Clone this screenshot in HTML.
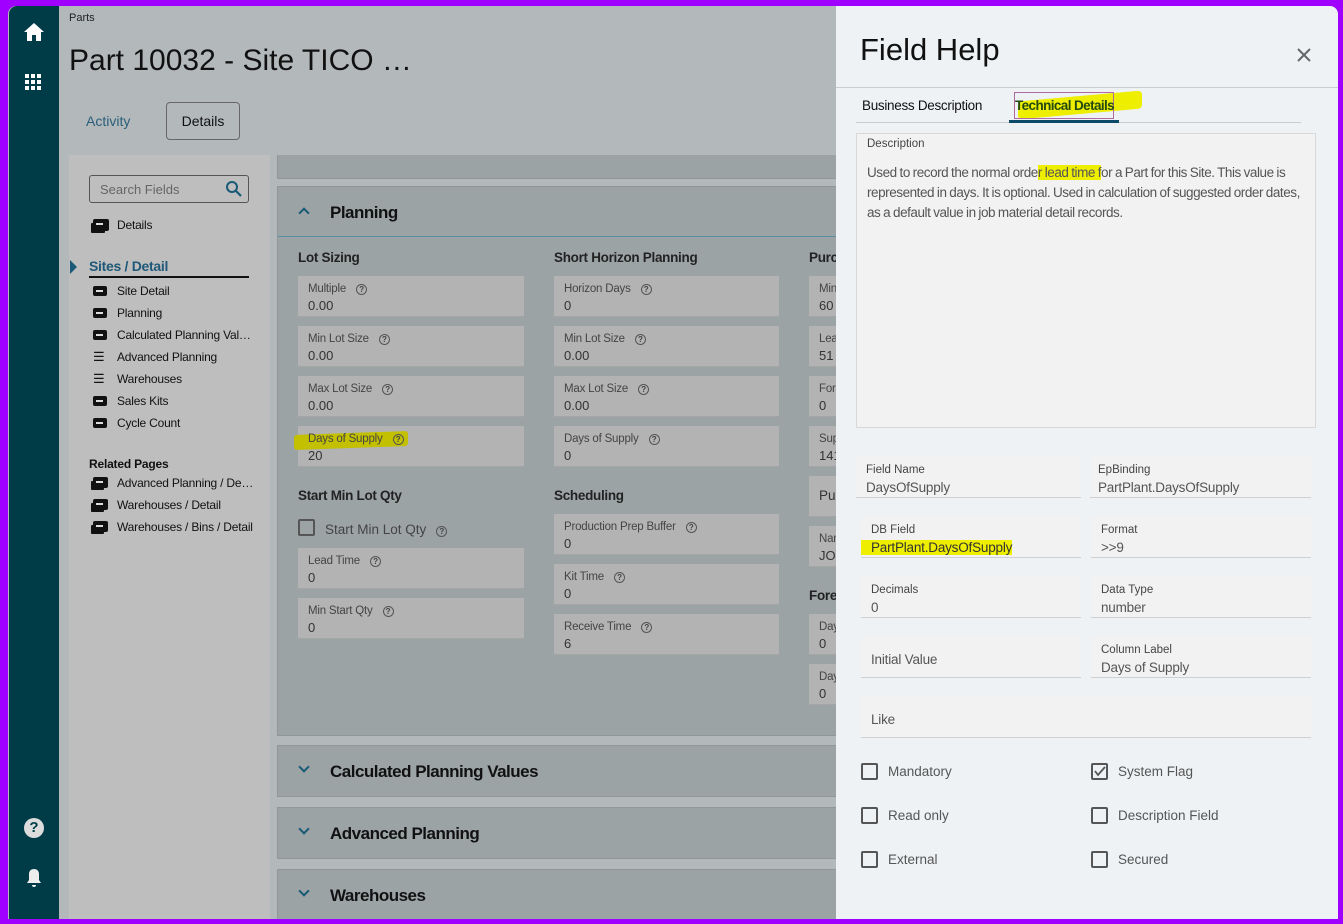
<!DOCTYPE html>
<html><head><meta charset="utf-8"><style>
*{box-sizing:border-box;margin:0;padding:0}
body{width:1343px;height:924px;overflow:hidden;background:#a000ff;font-family:"Liberation Sans",sans-serif;position:relative}
.a{position:absolute}
#frame{left:8px;top:6px;width:1330px;height:913px;background:#b3b8bb;overflow:hidden;border-radius:8px 8px 0 0}
.side{left:1px;top:0;width:50px;height:913px;background:#003c48;border-radius:8px 0 0 0}
.t{color:#222;white-space:nowrap}
.fb{background:#b3b3b3;height:40px;box-shadow:0 1px 0 #a5a5a5}
.fb .l{position:absolute;left:10px;top:7px;font-size:11.5px;color:#444;letter-spacing:-.2px}
.fb .v{position:absolute;left:10px;top:22px;font-size:13px;color:#333}
.q{display:inline-block;width:11px;height:11px;border:1.3px solid #555;border-radius:50%;font-size:8px;line-height:9px;text-align:center;margin-left:10px;vertical-align:0;color:#444;font-weight:bold}
.h{font-size:13.5px;font-weight:bold;color:#222;letter-spacing:-.3px}
.sec{background:#9ca3a5;border:1px solid #8f9799}
.sec .st{position:absolute;left:52px;font-size:17px;font-weight:bold;color:#111;letter-spacing:-.5px}
.chev{position:absolute;left:22px;width:8px;height:8px;border-right:2px solid #1a5a78;border-bottom:2px solid #1a5a78}
.nav{font-size:12px;color:#111;letter-spacing:-.2px}
.ico{position:absolute;left:0;width:14px;height:10px;background:#111;border-radius:2px}
.ico::after{content:"";position:absolute;left:3px;top:4px;width:7px;height:2px;background:#ddd}
.fh .l{position:absolute;top:8px;left:10px;font-size:11.5px;color:#444}
.fh .v{position:absolute;top:24px;left:10px;font-size:13.5px;color:#555;letter-spacing:-.2px}
.fh{background:#f2f2f2;border-bottom:1.5px solid #d0d0d0;height:42px}
.cb{width:17px;height:17px;border:2px solid #555;border-radius:2px}
.cl{font-size:13.5px;color:#555}
.hl{background:#eeee00}
</style></head><body>
<div id="frame" class="a">
 <div class="a side">
  <svg class="a" style="left:15px;top:17px" width="20" height="18" viewBox="0 0 20 18"><path d="M10 0L0 9h3v9h5v-6h4v6h5V9h3z" fill="#fff"/></svg>
  <svg class="a" style="left:16px;top:68px" width="18" height="18"><g fill="#fff"><rect x="0" y="0" width="4" height="4"/><rect x="6" y="0" width="4" height="4"/><rect x="12" y="0" width="4" height="4"/><rect x="0" y="6" width="4" height="4"/><rect x="6" y="6" width="4" height="4"/><rect x="12" y="6" width="4" height="4"/><rect x="0" y="12" width="4" height="4"/><rect x="6" y="12" width="4" height="4"/><rect x="12" y="12" width="4" height="4"/></g></svg>
  <div class="a" style="left:15px;top:812px;width:20px;height:20px;border-radius:50%;background:#ddd;color:#003c48;font-weight:bold;font-size:15px;text-align:center;line-height:20px">?</div>
  <svg class="a" style="left:17px;top:862px" width="16" height="20" viewBox="0 0 16 20"><path d="M8 1c-3 0-5 2-5 5v6l-2 3h14l-2-3V6c0-3-2-5-5-5zM6 17h4a2 2 0 0 1-4 0z" fill="#eee"/></svg>
 </div>
 <div class="a t" style="left:61px;top:6px;font-size:11px">Parts</div>
 <div class="a t" style="left:61px;top:38px;font-size:30px;color:#111">Part 10032 - Site TICO …</div>
 <div class="a" style="left:78px;top:107px;font-size:14px;color:#2a5f7a">Activity</div>
 <div class="a" style="left:158px;top:96px;width:74px;height:38px;border:1px solid #666;border-radius:4px;font-size:14px;text-align:center;line-height:36px;color:#111">Details</div>
 <!-- left nav -->
 <div class="a" style="left:61px;top:149px;width:201px;height:770px;background:#bebebe">
  <div class="a" style="left:20px;top:20px;width:160px;height:28px;border:1px solid #555;border-radius:3px;font-size:13px;color:#666;padding:6px 10px">Search Fields
   <svg class="a" style="right:5px;top:4px" width="18" height="18"><circle cx="7" cy="7" r="5" stroke="#1a5a78" stroke-width="2" fill="none"/><path d="M11 11l5 5" stroke="#1a5a78" stroke-width="2.2"/></svg></div>
  <div class="a nav" style="left:24px;top:63px;width:160px;height:16px"><span class="ico" style="top:1px;width:16px;height:12px;box-shadow:-3px 3px 0 -1px #111"></span><span style="position:absolute;left:24px;top:0">Details</span></div>
  <div class="a" style="left:1px;top:105px;width:0;height:0;border-left:7px solid #1a5a78;border-top:7px solid transparent;border-bottom:7px solid transparent"></div>
  <div class="a" style="left:20px;top:103px;width:160px;font-size:14px;font-weight:bold;color:#1f5878;border-bottom:2px solid #111;padding-bottom:2px;letter-spacing:-.3px">Sites / Detail</div>
  <div class="a nav" style="left:24px;top:125px;line-height:22px;width:170px">
   <div style="position:relative;padding-left:24px"><span class="ico" style="top:6px"></span>Site Detail</div>
   <div style="position:relative;padding-left:24px"><span class="ico" style="top:6px"></span>Planning</div>
   <div style="position:relative;padding-left:24px"><span class="ico" style="top:6px"></span>Calculated Planning Val…</div>
   <div style="position:relative;padding-left:24px"><span style="position:absolute;left:0;top:0;font-size:13px">☰</span>Advanced Planning</div>
   <div style="position:relative;padding-left:24px"><span style="position:absolute;left:0;top:0;font-size:13px">☰</span>Warehouses</div>
   <div style="position:relative;padding-left:24px"><span class="ico" style="top:6px"></span>Sales Kits</div>
   <div style="position:relative;padding-left:24px"><span class="ico" style="top:6px"></span>Cycle Count</div>
  </div>
  <div class="a" style="left:20px;top:302px;font-size:12px;font-weight:bold;color:#111;letter-spacing:-.2px">Related Pages</div>
  <div class="a nav" style="left:24px;top:317px;line-height:22px;width:170px">
   <div style="position:relative;padding-left:24px"><span class="ico" style="top:5px;width:15px;height:11px;box-shadow:-3px 3px 0 -1px #111"></span>Advanced Planning / De…</div>
   <div style="position:relative;padding-left:24px"><span class="ico" style="top:5px;width:15px;height:11px;box-shadow:-3px 3px 0 -1px #111"></span>Warehouses / Detail</div>
   <div style="position:relative;padding-left:24px"><span class="ico" style="top:5px;width:15px;height:11px;box-shadow:-3px 3px 0 -1px #111"></span>Warehouses / Bins / Detail</div>
  </div>
 </div>
 <!-- sections -->
 <div class="a sec" style="left:269px;top:149px;width:600px;height:24px;border-top:none"></div>
 <div class="a sec" style="left:269px;top:180px;width:600px;height:550px">
  <div class="chev" style="top:22px;transform:rotate(225deg)"></div>
  <div class="st" style="top:16px">Planning</div>
  <div class="a" style="left:0;top:49px;width:600px;height:1px;background:#5a8ea3"></div>
 </div>
 <div class="a h" style="left:290px;top:244px">Lot Sizing</div>
 <div class="a h" style="left:546px;top:244px">Short Horizon Planning</div>
 <div class="a h" style="left:801px;top:244px">Purchasing</div>
 <div class="a h" style="left:290px;top:482px">Start Min Lot Qty</div>
 <div class="a h" style="left:546px;top:482px">Scheduling</div>
 <div class="a h" style="left:801px;top:582px">Forecast</div>
 <div class="a fb" style="left:290px;top:270px;width:226px"><div class="l">Multiple<span class="q">?</span></div><div class="v">0.00</div></div>
 <div class="a fb" style="left:290px;top:320px;width:226px"><div class="l">Min Lot Size<span class="q">?</span></div><div class="v">0.00</div></div>
 <div class="a fb" style="left:290px;top:370px;width:226px"><div class="l">Max Lot Size<span class="q">?</span></div><div class="v">0.00</div></div>
 <div class="a fb" style="left:290px;top:420px;width:226px"></div>
 <div class="a" style="left:286px;top:427px;width:114px;height:15px;background:#c2c000;border-radius:3px;transform:skewY(-2deg)"></div>
 <div class="a fb" style="left:290px;top:420px;width:226px;background:transparent;box-shadow:none"><div class="l">Days of Supply<span class="q">?</span></div><div class="v">20</div></div>
 <div class="a cb" style="left:290px;top:513px"></div>
 <div class="a" style="left:317px;top:516px;font-size:13.5px;color:#444">Start Min Lot Qty<span class="q">?</span></div>
 <div class="a fb" style="left:290px;top:542px;width:226px"><div class="l">Lead Time<span class="q">?</span></div><div class="v">0</div></div>
 <div class="a fb" style="left:290px;top:592px;width:226px"><div class="l">Min Start Qty<span class="q">?</span></div><div class="v">0</div></div>
 <div class="a fb" style="left:546px;top:270px;width:225px"><div class="l">Horizon Days<span class="q">?</span></div><div class="v">0</div></div>
 <div class="a fb" style="left:546px;top:320px;width:225px"><div class="l">Min Lot Size<span class="q">?</span></div><div class="v">0.00</div></div>
 <div class="a fb" style="left:546px;top:370px;width:225px"><div class="l">Max Lot Size<span class="q">?</span></div><div class="v">0.00</div></div>
 <div class="a fb" style="left:546px;top:420px;width:225px"><div class="l">Days of Supply<span class="q">?</span></div><div class="v">0</div></div>
 <div class="a fb" style="left:546px;top:508px;width:225px"><div class="l">Production Prep Buffer<span class="q">?</span></div><div class="v">0</div></div>
 <div class="a fb" style="left:546px;top:558px;width:225px"><div class="l">Kit Time<span class="q">?</span></div><div class="v">0</div></div>
 <div class="a fb" style="left:546px;top:608px;width:225px"><div class="l">Receive Time<span class="q">?</span></div><div class="v">6</div></div>
 <div class="a fb" style="left:801px;top:270px;width:100px"><div class="l">Min Order</div><div class="v">60</div></div>
 <div class="a fb" style="left:801px;top:320px;width:100px"><div class="l">Lead Time</div><div class="v">51</div></div>
 <div class="a fb" style="left:801px;top:370px;width:100px"><div class="l">Fore</div><div class="v">0</div></div>
 <div class="a fb" style="left:801px;top:420px;width:100px"><div class="l">Supplier</div><div class="v">141</div></div>
 <div class="a fb" style="left:801px;top:470px;width:100px"><div class="v" style="top:12px;font-size:13.5px">Purchaser</div></div>
 <div class="a fb" style="left:801px;top:520px;width:100px"><div class="l">Name</div><div class="v">JOHN</div></div>
 <div class="a fb" style="left:801px;top:608px;width:100px"><div class="l">Days</div><div class="v">0</div></div>
 <div class="a fb" style="left:801px;top:658px;width:100px"><div class="l">Days</div><div class="v">0</div></div>
 <div class="a sec" style="left:269px;top:739px;width:600px;height:52px"><div class="chev" style="top:17px;transform:rotate(45deg)"></div><div class="st" style="top:16px">Calculated Planning Values</div></div>
 <div class="a sec" style="left:269px;top:801px;width:600px;height:52px"><div class="chev" style="top:17px;transform:rotate(45deg)"></div><div class="st" style="top:16px">Advanced Planning</div></div>
 <div class="a sec" style="left:269px;top:863px;width:600px;height:60px"><div class="chev" style="top:17px;transform:rotate(45deg)"></div><div class="st" style="top:16px">Warehouses</div></div>
 <!-- field help panel -->
 <div class="a" style="left:828px;top:0;width:502px;height:913px;background:#eef2f5;border-radius:0 8px 0 0">
  <div class="a" style="left:24px;top:26px;font-size:31px;color:#111">Field Help</div>
  <svg class="a" style="left:461px;top:42px" width="14" height="14"><path d="M1 1l12 12M13 1L1 13" stroke="#666" stroke-width="2"/></svg>
  <div class="a" style="left:0;top:81px;width:502px;height:1px;background:#ccc"></div>
  <div class="a" style="left:20px;top:116px;width:445px;height:1px;background:#ccc"></div>
  <div class="a" style="left:26px;top:92px;font-size:13.5px;color:#111;letter-spacing:-.3px">Business Description</div>
  <div class="a" style="left:182px;top:90px;width:124px;height:18px;background:#eeee00;border-radius:4px;transform:skewY(-5deg)"></div>
  <div class="a" style="left:178px;top:86px;width:100px;height:27px;border:1px solid #b06aa0"></div>
  <div class="a" style="left:179px;top:92px;font-size:13.5px;color:#244a10;font-weight:bold;letter-spacing:-.6px">Technical Details</div>
  <div class="a" style="left:173px;top:114px;width:110px;height:3px;background:#0d4a68"></div>
  <div class="a" style="left:20px;top:127px;width:460px;height:295px;background:#f2f2f2;border:1px solid #d8d8d8">
   <div class="a" style="left:10px;top:4px;font-size:11.5px;color:#444">Description</div>
   <div class="a" style="left:10px;top:29px;width:445px;font-size:13.5px;line-height:20px;color:#555;letter-spacing:-.45px;word-spacing:-.5px">Used to record the normal orde<span class="hl">r lead time f</span>or a Part for this Site. This value is represented in days. It is optional. Used in calculation of suggested order dates, as a default value in job material detail records.</div>
  </div>
  <div class="a fh" style="left:20px;top:450px;width:225px"><div class="l">Field Name</div><div class="v">DaysOfSupply</div></div>
  <div class="a fh" style="left:254px;top:450px;width:221px"><div class="l" style="left:8px">EpBinding</div><div class="v" style="left:8px">PartPlant.DaysOfSupply</div></div>
  <div class="a fh" style="left:25px;top:510px;width:220px"><div class="v" style="color:#333;left:0;padding-left:10px;background:#eeee00">PartPlant.DaysOfSupply</div><div class="l">DB Field</div></div>
  <div class="a fh" style="left:255px;top:510px;width:220px"><div class="l">Format</div><div class="v">&gt;&gt;9</div></div>
  <div class="a fh" style="left:25px;top:570px;width:220px"><div class="l">Decimals</div><div class="v">0</div></div>
  <div class="a fh" style="left:255px;top:570px;width:220px"><div class="l">Data Type</div><div class="v">number</div></div>
  <div class="a fh" style="left:25px;top:630px;width:220px"><div class="v" style="top:16px">Initial Value</div></div>
  <div class="a fh" style="left:255px;top:630px;width:220px"><div class="l">Column Label</div><div class="v">Days of Supply</div></div>
  <div class="a fh" style="left:25px;top:690px;width:450px"><div class="v" style="top:16px">Like</div></div>
  <div class="a cb" style="left:25px;top:757px"></div><div class="a cl" style="left:52px;top:758px">Mandatory</div>
  <div class="a cb" style="left:255px;top:757px"><svg class="a" style="left:1px;top:0" width="12" height="12"><path d="M1 6l3 4 7-8" stroke="#555" stroke-width="1.8" fill="none"/></svg></div><div class="a cl" style="left:282px;top:758px">System Flag</div>
  <div class="a cb" style="left:25px;top:801px"></div><div class="a cl" style="left:52px;top:802px">Read only</div>
  <div class="a cb" style="left:255px;top:801px"></div><div class="a cl" style="left:282px;top:802px">Description Field</div>
  <div class="a cb" style="left:25px;top:845px"></div><div class="a cl" style="left:52px;top:846px">External</div>
  <div class="a cb" style="left:255px;top:845px"></div><div class="a cl" style="left:282px;top:846px">Secured</div>
 </div>
</div>
</body></html>
